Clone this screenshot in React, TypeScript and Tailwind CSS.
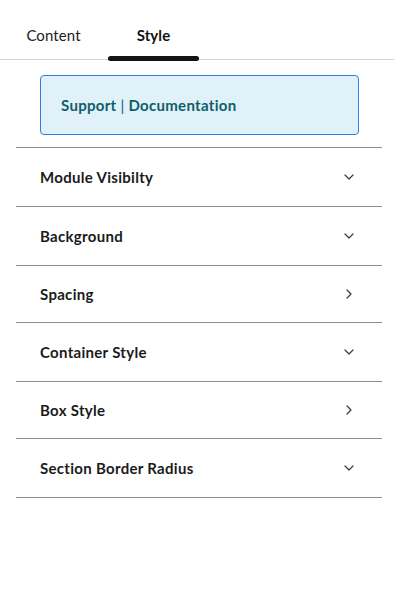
import React from 'react';

type Section = {
  title: string;
  open: boolean;
};

const sections: Section[] = [
  { title: 'Module Visibilty', open: true },
  { title: 'Background', open: true },
  { title: 'Spacing', open: false },
  { title: 'Container Style', open: true },
  { title: 'Box Style', open: false },
  { title: 'Section Border Radius', open: true },
];

const Chevron: React.FC<{ open: boolean }> = ({ open }) =>
  open ? (
    <svg width="10" height="6" viewBox="0 0 10 6" fill="none">
      <path d="M1 1l4 4 4-4" stroke="#3a3a3a" strokeWidth="1.2" strokeLinecap="round" strokeLinejoin="round" />
    </svg>
  ) : (
    <svg width="6" height="10" viewBox="0 0 6 10" fill="none">
      <path d="M1 1l4 4-4 4" stroke="#3a3a3a" strokeWidth="1.2" strokeLinecap="round" strokeLinejoin="round" />
    </svg>
  );

const App: React.FC = () => {
  const [tab, setTab] = React.useState('Style');

  return (
    <div className="min-h-[592px] w-[394px] bg-white font-['Lato','Liberation_Sans',sans-serif] text-[#1b1b1b]">
      {/* tabs */}
      <div className="flex h-[60px] gap-[9px] border-b border-[#d4d4d4] pl-2">
        {['Content', 'Style'].map((t) => (
          <button
            key={t}
            onClick={() => setTab(t)}
            className={`relative flex w-[91px] items-center justify-center pt-[11px] text-[15px] tracking-[0.1px] ${
              tab === t ? 'font-bold text-[#111]' : 'text-[#222]'
            }`}
          >
            {t}
            {tab === t && (
              <span className="absolute -bottom-[2px] left-0 h-[5px] w-full rounded-full bg-[#141414]" />
            )}
          </button>
        ))}
      </div>

      <div className="pl-4 pr-3">
        <div className="ml-6 mr-[23px] mt-[15px] flex h-[60px] items-center rounded-[4px] border border-[#2a7fe0] bg-[#e1f1fa] pl-5">
          <span className="text-[15px] font-bold tracking-[0.3px] text-[#0d6069]">
            Support <span className="font-normal">|</span> Documentation
          </span>
        </div>

        <div className="mt-[12px] border-b border-[#8c8c8c]">
          {sections.map((s) => (
            <div
              key={s.title}
              className={`flex items-center justify-between border-t border-[#8c8c8c] pl-6 pr-[28px] ${
                s.open ? 'h-[59px]' : 'h-[57px]'
              }`}
            >
              <span className="text-[15px] font-bold tracking-[0.3px]">{s.title}</span>
              <span className="flex w-[10px] justify-center">
                <Chevron open={s.open} />
              </span>
            </div>
          ))}
        </div>
      </div>
    </div>
  );
};

export default App;
